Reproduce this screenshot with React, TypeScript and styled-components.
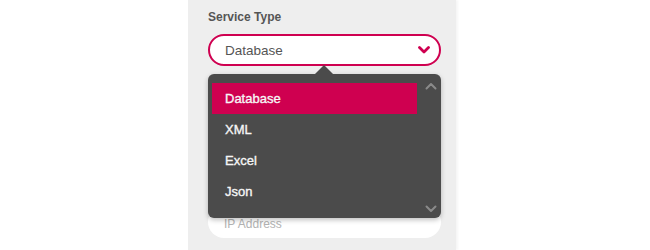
import styled, { createGlobalStyle } from "styled-components";

const GlobalStyle = createGlobalStyle`
  html, body {
    margin: 0;
    padding: 0;
    background: #ffffff;
    font-family: "Liberation Sans", Arial, sans-serif;
  }
`;

const PINK = "#cf0050";

const Page = styled.main`
  width: 650px;
  height: 250px;
  overflow: hidden;
  display: flex;
  background: #ffffff;
`;

const Panel = styled.section`
  margin-left: 188px;
  width: 268px;
  height: 250px;
  box-sizing: border-box;
  padding: 10px 15px 0 20px;
  background: #eeeeee;
  box-shadow: 2px 0 2px rgba(0, 0, 0, 0.04);
  display: flex;
  flex-direction: column;
`;

const Field = styled.div`
  position: relative;
  display: flex;
  flex-direction: column;
`;

const Label = styled.label`
  font-size: 12px;
  font-weight: 700;
  color: #555555;
  line-height: 14px;
  margin-bottom: 10px;
`;

const Select = styled.div`
  height: 32px;
  box-sizing: border-box;
  border: 2px solid ${PINK};
  border-radius: 16px;
  background: #ffffff;
  display: flex;
  align-items: center;
  justify-content: space-between;
  padding: 0 9px 0 15px;
  font-size: 13.5px;
  color: #555555;
`;

const Menu = styled.div`
  position: absolute;
  left: 0;
  right: 0;
  top: 64px;
  z-index: 2;
  background: #4b4b4b;
  border-radius: 6px;
  padding: 9px 24px 11px 4px;
  box-shadow: 0 2px 5px rgba(0, 0, 0, 0.25);

  &::before {
    content: "";
    position: absolute;
    top: -9px;
    left: 107px;
    border-left: 9px solid transparent;
    border-right: 9px solid transparent;
    border-bottom: 9px solid #4b4b4b;
  }
`;

const Option = styled.div<{ $active?: boolean }>`
  height: 31px;
  display: flex;
  align-items: center;
  padding-left: 13px;
  font-size: 13px;
  color: #f6f6f6;
  -webkit-text-stroke: 0.35px #f6f6f6;
  background: ${(p) => (p.$active ? PINK : "transparent")};
`;

const Scroll = styled.svg<{ $bottom?: boolean }>`
  position: absolute;
  right: 4px;
  ${(p) => (p.$bottom ? "bottom: 5px;" : "top: 8px;")}
`;

const Input = styled.div`
  margin-top: 140px;
  height: 32px;
  box-sizing: border-box;
  border-radius: 16px;
  background: #ffffff;
  display: flex;
  align-items: center;
  padding: 4px 15px 0 16px;
  font-size: 12px;
  color: #b3b3b3;
`;

const Chevron = ({ color }: { color: string }) => (
  <svg width="12" height="8" viewBox="0 0 12 8">
    <path
      d="M1.5 1.5 L6 6 L10.5 1.5"
      fill="none"
      stroke={color}
      strokeWidth="2.8"
      strokeLinecap="round"
      strokeLinejoin="round"
    />
  </svg>
);

export default function App() {
  const options = ["Database", "XML", "Excel", "Json"];
  return (
    <Page>
      <GlobalStyle />
      <Panel>
        <Field>
          <Label>Service Type</Label>
          <Select>
            <span>Database</span>
            <Chevron color={PINK} />
          </Select>
          <Menu>
            {options.map((o, i) => (
              <Option key={o} $active={i === 0}>
                {o}
              </Option>
            ))}
            <Scroll width="12" height="8" viewBox="0 0 12 8">
              <path d="M1.5 6.5 L6 2 L10.5 6.5" fill="none" stroke="#8a8a8a" strokeWidth="2" strokeLinecap="round" strokeLinejoin="round" />
            </Scroll>
            <Scroll $bottom width="12" height="8" viewBox="0 0 12 8">
              <path d="M1.5 1.5 L6 6 L10.5 1.5" fill="none" stroke="#8a8a8a" strokeWidth="2" strokeLinecap="round" strokeLinejoin="round" />
            </Scroll>
          </Menu>
        </Field>
        <Input>IP Address</Input>
      </Panel>
    </Page>
  );
}
